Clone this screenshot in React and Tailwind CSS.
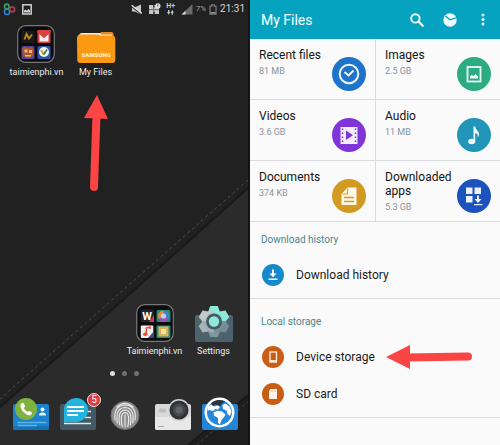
import React from "react";

/* ---------- Status bar glyphs ---------- */

function StatusBar() {
  return (
    <div className="flex h-[18px] items-center justify-between px-[3px] text-[#c8c8c8]">
      <div className="flex items-center gap-[6px]">
        <svg width="13" height="13" viewBox="0 0 13 13" fill="none" strokeWidth="1.6">
          <circle cx="3.8" cy="3.4" r="2.3" stroke="#3a9b63" />
          <circle cx="4" cy="8.9" r="2.6" stroke="#2f7fc4" />
          <circle cx="9.2" cy="6.4" r="2.4" stroke="#b5414e" />
        </svg>
        <svg width="10" height="11" viewBox="0 0 10 11" fill="none">
          <rect x="0.8" y="0.8" width="8.4" height="9.2" stroke="#d0d0d0" strokeWidth="1.5" />
          <path d="M2 8.5V6.5L3.5 5.5L5 6.8L6.5 4.8L8 6.5V8.5Z" fill="#d0d0d0" />
        </svg>
      </div>
      <div className="flex items-center gap-[3px]">
        <svg className="mr-[2px]" width="12" height="11" viewBox="0 0 12 11">
          <path d="M1 3.4H3.6L10 0.4V10.4L3.6 7.4H1Z" fill="#c8c8c8" />
          <path d="M0.6 2.4L10.8 10.6" stroke="#222" strokeWidth="1.4" />
          <path d="M0.6 1.2L10.8 9.4" stroke="#e2e2e2" strokeWidth="1.4" />
        </svg>
        <svg width="13" height="12" viewBox="0 0 13 12">
          <path d="M1 2H5.2V4.4Q6 3.6 6.4 4.6V2H11V11H6.6V8.4Q5.6 9.400 5.200 8.400V11H1V7.400Q2.600 6.600 1 5.800Z" fill="#c8c8c8" />
          <path d="M5.800 2V11M1 6.600H11" stroke="#4a4a4a" strokeWidth="0.700" />
          <circle cx="9.9" cy="2.9" r="2.6" fill="#e0e0e0" />
          <path d="M9.9 1.4V3.6" stroke="#555" strokeWidth="1" />
        </svg>
        <div className="flex w-[14px] flex-col items-center">
          <span className="text-[7px] font-bold leading-[7px]">H+</span>
          <svg width="7" height="5" viewBox="0 0 7 5" fill="#c8c8c8">
            <path d="M0 2H1V0H2.4V2H3.4L1.7 4.8Z" />
            <path d="M3.6 2.8L5.2 0L6.9 2.8H5.9V4.8H4.6V2.8Z" />
          </svg>
        </div>
        <svg width="12" height="11" viewBox="0 0 12 11">
          <path d="M0.5 10.5L11.5 0V10.5Z" fill="#6a6a6a" />
          <path d="M0.5 10.5L4.5 6.7V10.5Z" fill="#d8d8d8" />
        </svg>
        <span className="text-[8px] leading-[10px] text-[#a4a4a4]">7%</span>
        <svg width="8" height="11" viewBox="0 0 8 11" fill="none">
          <path d="M1 2.2H2.7V0.8H5.3V2.2H7V10.2H1Z" stroke="#7c7c7c" strokeWidth="1.2" />
          <path d="M1.5 8.8H6.5" stroke="#a0a0a0" strokeWidth="1.4" />
        </svg>
        <span className="text-[10px] leading-[14px] text-[#d4d4d4]">21:31</span>
      </div>
    </div>
  );
}

/* ---------- Launcher artwork ---------- */

function FolderOne() {
  return (
    <svg width="38" height="38" viewBox="0 0 38 38">
      <rect x="0.7" y="0.7" width="36.6" height="36.6" rx="8" fill="#0c0c10" stroke="#77777a" strokeWidth="1.2" />
      <rect x="4.5" y="6" width="13" height="12" rx="2" fill="#1b1a18" />
      <path d="M7.500 14.500L9.500 9L12 13.500L15 9.500" stroke="#b98a2c" strokeWidth="1.800" fill="none" />
      <rect x="20.5" y="5" width="13" height="13" rx="1" fill="#d8433f" />
      <path d="M22.5 7.5L27 11.5L31.5 7.5V16.5H22.5Z" fill="#f4eeee" />
      <path d="M20.5 6L27 12L33.5 6" stroke="#d8433f" strokeWidth="2" fill="none" />
      <rect x="4.5" y="21" width="13" height="13" rx="1.5" fill="#56409a" />
      <path d="M5 24L8 21.5L11 23L14.5 21.5L17 25L16 31L11 33.5L6 31Z" fill="#a9542d" />
      <path d="M7.5 24.5H10.5V27.5H7.5ZM12 25H15V28H12ZM8 30H14V31.5H8Z" fill="#e7b67c" />
      <rect x="20.5" y="21" width="13" height="13" rx="1.5" fill="#2c56a9" />
      <circle cx="27" cy="27" r="5" fill="#f6f6f6" />
      <path d="M24 25L26.6 29.5" stroke="#d5a327" strokeWidth="2" />
      <path d="M26.6 29.5L30 24.5" stroke="#3c8b4e" strokeWidth="2" />
    </svg>
  );
}

function FolderTwo() {
  return (
    <svg width="38" height="38" viewBox="0 0 38 38">
      <rect x="0.7" y="0.7" width="36.6" height="36.6" rx="8" fill="#0d0d0e" stroke="#77777a" strokeWidth="1.2" />
      <rect x="5" y="5.5" width="13" height="12.5" rx="1.5" fill="#24242b" />
      <path d="M13 18L18 11V18Z" fill="#c63a63" />
      <text x="11" y="15.5" fontSize="11" fontWeight="700" textAnchor="middle" fill="#fff">W</text>
      <rect x="20.5" y="6" width="14" height="12" rx="1.5" fill="#23897e" />
      <circle cx="27.5" cy="12" r="5.5" fill="#39a96c" />
      <path d="M27.5 12V6.5A5.5 5.5 0 0 1 32.3 14.8Z" fill="#3c83d7" />
      <path d="M27.5 12L32.3 14.8A5.5 5.5 0 0 1 22.7 14.8Z" fill="#a04bbd" />
      <path d="M27.5 12L22.7 14.8A5.5 5.5 0 0 1 27.5 6.5Z" fill="#e48b35" />
      <circle cx="27.5" cy="12" r="2.6" fill="#b9d7da" />
      <rect x="4.8" y="21.5" width="12.5" height="12.5" rx="1" fill="#f2efee" />
      <path d="M12 34L17.3 28V34Z" fill="#46447e" />
      <path d="M10.3 30V24L14 23V25" stroke="#e4502e" strokeWidth="1.5" fill="none" />
      <ellipse cx="9.2" cy="30.3" rx="2.2" ry="1.8" fill="#e4502e" />
      <rect x="20.5" y="21.5" width="14" height="12.5" rx="1" fill="#278d7b" />
      <rect x="22.5" y="22.5" width="10" height="10" fill="#d7b558" />
      <rect x="25" y="25" width="5" height="5" fill="#f2e1a0" />
    </svg>
  );
}

function MyFilesIcon() {
  return (
    <svg width="40" height="38" viewBox="0 0 40 38">
      <path d="M21 10L25.5 7H35.5Q37.5 7 37.7 10V15H21Z" fill="#e58a18" />
      <path d="M3 11Q3 8 6 8H24L26 9.5H36V16H3Z" fill="#f5ead8" />
      <path d="M1 13.5Q1 9.5 4.5 9.5H20.5Q23 9.5 24.5 10.5H36Q39.3 10.5 39.3 14V35Q39.3 38 36 38H4.5Q1.3 38 1.3 35Z" fill="#fb9a12" />
      <text x="20.2" y="32" fontSize="6" fontWeight="900" textAnchor="middle" fill="#fdeed4">SAMSUNG</text>
    </svg>
  );
}

const TEETH = [
  { angle: 0, color: "#8ce8d7" },
  { angle: 60, color: "#8ce8d7" },
  { angle: 120, color: "#748c95" },
  { angle: 180, color: "#80989f" },
  { angle: 240, color: "#a9b5b8" },
  { angle: 300, color: "#c0cbc9" },
];

function SettingsIcon() {
  return (
    <svg width="40" height="38" viewBox="0 0 40 38">
      <path d="M1 13Q1 11 3 11H37Q39 11 39 13V36Q39 38 37 38H3Q1 38 1 36Z" fill="#4d626d" />
      {TEETH.map(({ angle, color }) => (
        <path key={angle} d="M14 8L16.200 2H23.800L26 8Z" fill={color} transform={`rotate(${angle} 20 17.5)`} />
      ))}
      <path d="M20 6.500A11 11 0 0 1 31 17.500H20Z" fill="#8ce8d7" />
      <path d="M31 17.500A11 11 0 0 1 20 28.500V17.500Z" fill="#788f98" />
      <path d="M20 28.500A11 11 0 0 1 9 17.500H20Z" fill="#a3b0b3" />
      <path d="M9 17.500A11 11 0 0 1 20 6.500V17.500Z" fill="#c0cbc9" />
      <circle cx="20" cy="17.5" r="8" fill="#465b65" />
      <circle cx="20" cy="17.5" r="5.2" fill="#8deadb" />
    </svg>
  );
}

function DialerIcon() {
  return (
    <svg width="38" height="36" viewBox="0 0 38 36">
      <path d="M1 9Q1 7 3 7H35Q37 7 37 9V31Q37 33 35 33H3Q1 33 1 31Z" fill="#1b82cb" />
      <path d="M1 29H37V31Q37 33 35 33H3Q1 33 1 31Z" fill="#1673b7" />
      <circle cx="30.5" cy="12.5" r="2" fill="#eef6fb" />
      <path d="M27 18.5Q27 15.5 30.5 15.5T34 18.5Z" fill="#eef6fb" />
      <path d="M5.5 25.5H34.5M5.5 28.5H25" stroke="#5fb3e8" strokeWidth="1.3" />
      <circle cx="14" cy="12" r="11" fill="#7eb43e" />
      <path d="M8.6 7.2Q10.5 4.6 11.8 6.5L13 9Q13.3 10 11.8 11Q13 13.8 15.5 15Q16.6 13.6 17.5 14L19.8 15.4Q20.8 16.4 19 17.8Q16.5 19.6 12.3 15.8Q7.5 11.2 8.6 7.2Z" fill="#fff" />
    </svg>
  );
}

function MessagesIcon() {
  return (
    <svg width="38" height="36" viewBox="0 0 38 36">
      <path d="M1 9Q1 7 3 7H35Q37 7 37 9V31Q37 33 35 33H3Q1 33 1 31Z" fill="#455964" />
      <path d="M5 26.5H32M26 20.5H32M26 14.5H32" stroke="#dfe5e8" strokeWidth="1.4" />
      <path d="M5 26V12A12 12 0 1 1 17 25H8Z" fill="#23b4e0" />
      <path d="M8 10H25M8 14H25M8 18H19" stroke="#fff" strokeWidth="2" />
    </svg>
  );
}

function FingerprintIcon() {
  return (
    <svg width="38" height="36" viewBox="0 0 38 36" fill="none">
      <circle cx="19" cy="18.5" r="14" fill="#8d8d8d" stroke="#707070" />
      <g stroke="#ededed" strokeWidth="1.1" strokeLinecap="round">
        <path d="M9 23Q7.5 8.5 19 8Q31 8.5 29 23" />
        <path d="M11.3 26Q9 11 19 10.5Q29 11 26.7 26" />
        <path d="M13.8 28Q11 13.5 19 13Q27 13.5 24.2 28" />
        <path d="M16.2 29.5Q13.5 16 19 15.5Q24.5 16 21.8 29.5" />
        <path d="M19 18V30" />
        <path d="M11 10Q19 2.500 27 10" />
      </g>
    </svg>
  );
}

function CameraIcon() {
  return (
    <svg width="38" height="36" viewBox="0 0 38 36">
      <path d="M1 9Q1 7 3 7H35Q37 7 37 9V31Q37 33 35 33H3Q1 33 1 31Z" fill="#d9d9d9" />
      <path d="M1 20H37V31Q37 33 35 33H3Q1 33 1 31Z" fill="#e8e8e8" />
      <rect x="5" y="11.500" width="7" height="4" rx="1" fill="#c0c0c0" />
      <path d="M4 29.500H10" stroke="#aaa" strokeWidth="1" />
      <circle cx="25" cy="13" r="11" fill="#d2d2d2" />
      <circle cx="25" cy="13" r="9.500" fill="#303336" />
      <circle cx="25" cy="13" r="6.500" fill="#45494e" />
      <circle cx="25" cy="13" r="3.600" fill="#5f6469" />
    </svg>
  );
}

function BrowserIcon() {
  return (
    <svg width="38" height="36" viewBox="0 0 38 36">
      <path d="M1 9Q1 7 3 7H35Q37 7 37 9V31Q37 33 35 33H3Q1 33 1 31Z" fill="#2484d6" />
      <circle cx="18.500" cy="15.500" r="15" fill="#fff" />
      <circle cx="18.500" cy="15.500" r="12.500" fill="#2587d9" />
      <path d="M10 6.300Q13 3.300 18.500 3Q22 3 24 4.500L21 6.500L19.500 9L15 7.500L12 9Z" fill="#30343a" />
      <path d="M7 9.500L10 7.500L13 9.500L16.500 8.500L19 10L17 12.500L14.500 12L12 14L8.500 13L6.500 14Z" fill="#fff" />
      <path d="M12.500 15.500L16 13.800L21 14.500L24.500 17.500L23 20L20.500 23L19 27.500L17 26L17 21L13 18.500Z" fill="#fff" />
      <path d="M21.500 8L24.500 6.500L28.500 9.500L30.500 14.500L29 19L26.500 17L25.500 13.500L22 12Z" fill="#fff" />
    </svg>
  );
}

function Wallpaper() {
  return (
    <svg className="absolute inset-0 h-full w-full" viewBox="0 0 250 445" preserveAspectRatio="none" aria-hidden="true">
      <rect width="250" height="445" fill="#212121" />
      <path d="M250 189L125 300L0 408V445H250Z" fill="#2b2b2b" />
      <path d="M250 188L124 300L0 407" stroke="#191919" strokeWidth="2" fill="none" />
      <path d="M250 180L115 298L0 399" stroke="#505050" strokeWidth="1" strokeDasharray="3 3" fill="none" />
      <path d="M190 445L250 395V445Z" fill="#1e1e1e" />
      <path d="M190 445L250 395" stroke="#191919" strokeWidth="2" />
      <path d="M198 445L250 402" stroke="#484848" strokeWidth="1" strokeDasharray="3 3" />
    </svg>
  );
}

function HomeApp({ label, icon, children }) {
  return (
    <div className="relative flex flex-col items-center">
      <button type="button" className="flex flex-col items-center gap-[2px] whitespace-nowrap text-[9px] leading-[14px] text-[#ececec]">
        {icon}
        <span>{label}</span>
      </button>
      {children}
    </div>
  );
}

function HomeScreen() {
  return (
    <section className="relative flex min-h-screen flex-col border-r-2 border-[#141414]" aria-label="Home screen">
      <Wallpaper />
      <div className="relative flex flex-1 flex-col">
        <StatusBar />
        <div className="mt-[7px] grid grid-cols-4 pl-[7px] pr-[5px]">
          <HomeApp label="taimienphi.vn" icon={<FolderOne />} />
          <HomeApp label="My Files" icon={<MyFilesIcon />}>
            <svg className="absolute top-full mt-4" width="24" height="97" viewBox="0 0 24 97" aria-hidden="true">
              <path d="M12.500 20L10 92" stroke="#fb4444" strokeWidth="8" strokeLinecap="round" />
              <path d="M13 0L24 24L0 23Z" fill="#fb4444" />
            </svg>
          </HomeApp>
        </div>
        <div className="flex-1" />
        <div className="grid grid-cols-4 pl-[7px] pr-[5px]">
          <div className="col-start-3">
            <HomeApp label="Taimienphi.vn" icon={<FolderTwo />} />
          </div>
          <HomeApp label="Settings" icon={<SettingsIcon />} />
        </div>
        <div className="mt-[13px] flex justify-center gap-[7px]" aria-hidden="true">
          <span className="size-[5px] rounded-full bg-[#dedede]" />
          <span className="size-[5px] rounded-full bg-[#717171]" />
          <span className="size-[5px] rounded-full bg-[#717171]" />
        </div>
        <nav className="mt-[21px] grid grid-cols-5 justify-items-center pb-3 pl-[7px] pr-[4px]" aria-label="Dock">
          <button type="button" aria-label="Phone"><DialerIcon /></button>
          <button type="button" aria-label="Messages" className="relative">
            <MessagesIcon />
            <span className="absolute -right-1 -top-1 flex size-[14px] items-center justify-center rounded-full border border-[#f1dede] bg-[#dd3c42] text-[10px] leading-[12px] text-white">5</span>
          </button>
          <button type="button" aria-label="Fingerprint"><FingerprintIcon /></button>
          <button type="button" aria-label="Camera"><CameraIcon /></button>
          <button type="button" aria-label="Browser"><BrowserIcon /></button>
        </nav>
      </div>
    </section>
  );
}

/* ---------- File manager ---------- */

const CATEGORIES = [
  {
    name: "Recent files", size: "81 MB", bg: "bg-[#1e74c8]",
    icon: (
      <g fill="none" stroke="#eef7ff" strokeWidth="2">
        <circle cx="17" cy="17" r="9.3" />
        <path d="M12.500 15L16.500 18.500L21.500 13.500" />
      </g>
    ),
  },
  {
    name: "Images", size: "2.5 GB", bg: "bg-[#2bac83]",
    icon: (
      <g>
        <rect x="10.500" y="10" width="13" height="14.500" fill="none" stroke="#effaf5" strokeWidth="1.800" />
        <path d="M13 21.500V19L15 18L16.500 19L18.500 17L21 19.500V21.500Z" fill="#effaf5" />
      </g>
    ),
  },
  {
    name: "Videos", size: "3.6 GB", bg: "bg-[#8035d9]",
    icon: (
      <g>
        <rect x="8.500" y="9" width="17" height="17" fill="#f4ecff" />
        <path d="M10.500 10.500V25M23.500 10.500V25" stroke="#8035d9" strokeWidth="1.500" strokeDasharray="1.500 2.500" />
        <path d="M14 12.500V22L21 17.300Z" fill="#8035d9" />
      </g>
    ),
  },
  {
    name: "Audio", size: "11 MB", bg: "bg-[#2196b9]",
    icon: (
      <g fill="#f0fbff">
        <ellipse cx="14.700" cy="23.500" rx="3.500" ry="2.800" />
        <path d="M16.500 8.500H18.200Q18.600 11.200 20.700 12.900Q23.400 15.800 20.800 19.500Q21.400 15.900 18.200 15V23.500H16.500Z" />
      </g>
    ),
  },
  {
    name: "Documents", size: "374 KB", bg: "bg-[#d29a20]",
    icon: (
      <g>
        <path d="M15.500 8.500H24.500V26H9.500V15Z" fill="#fff8e8" />
        <path d="M15.700 9.500V15H10.500" stroke="#d29a20" strokeWidth="1" fill="none" />
        <path d="M12 18.500H22M12 22.500H22" stroke="#d29a20" strokeWidth="1.400" />
      </g>
    ),
  },
  {
    name: "Downloaded apps", size: "5.3 GB", bg: "bg-[#1c52bd]",
    icon: (
      <g fill="#eaf3ff">
        <rect x="9" y="8.500" width="6.500" height="6.500" />
        <rect x="17.500" y="8.500" width="6.500" height="6.500" />
        <rect x="9" y="17" width="6.500" height="6.500" />
        <path d="M20 16.500H22V20H24.500L21 24L17.500 20H20Z" />
        <rect x="17" y="25" width="8.500" height="1.200" />
      </g>
    ),
  },
];

function Category({ name, size, bg, icon }) {
  return (
    <button type="button" className="flex h-[61px] items-start justify-between border-b border-[#d9dbdd] px-[9px] pt-[9px] text-left even:border-l">
      <span className="flex min-w-0 flex-1 flex-col gap-px">
        <span className="text-[12px] leading-[14px] text-[#141414]">{name}</span>
        <span className="text-[9px] leading-[16px] text-[#87939e]">{size}</span>
      </span>
      <span className={`mt-[9px] size-[34px] shrink-0 rounded-full ${bg}`}>
        <svg width="34" height="34" viewBox="0 0 34 34">{icon}</svg>
      </span>
    </button>
  );
}

function ListRow({ label, bg, children }) {
  return (
    <button type="button" className="flex h-[37px] items-center gap-3 pl-3 text-left text-[12px] text-[#1a1a1a]">
      <span className={`size-[22px] rounded-full ${bg}`}>
        <svg width="22" height="22" viewBox="0 0 22 22">{children}</svg>
      </span>
      {label}
    </button>
  );
}

function FilesScreen() {
  return (
    <main className="min-h-screen bg-[#fafafa]">
      <header className="flex h-[39px] items-center justify-between bg-[#06a3c0] pl-[11px] pr-[10px] text-white">
        <h1 className="text-[14px] leading-5">My Files</h1>
        <div className="flex items-center gap-[19px]">
          <button type="button" aria-label="Search">
            <svg width="14" height="14" viewBox="0 0 14 14" fill="none" stroke="#eefaff" strokeLinecap="round">
              <circle cx="5.400" cy="5.400" r="4.200" strokeWidth="1.900" />
              <path d="M8.700 8.700L12.700 12.700" strokeWidth="2.200" />
            </svg>
          </button>
          <button type="button" aria-label="Storage usage">
            <svg width="14" height="14" viewBox="0 0 14 14">
              <circle cx="7" cy="7" r="6.700" fill="#eefaff" />
              <path d="M2.500 3L7 6.800L12.800 4.800" stroke="#06a3c0" strokeWidth="1.300" fill="none" />
            </svg>
          </button>
          <button type="button" aria-label="More options" className="px-[5px]">
            <svg width="4" height="13" viewBox="0 0 4 13" fill="#eefaff">
              <circle cx="2" cy="2" r="1.500" />
              <circle cx="2" cy="6.500" r="1.500" />
              <circle cx="2" cy="11" r="1.500" />
            </svg>
          </button>
        </div>
      </header>

      <div className="grid grid-cols-2">
        {CATEGORIES.map((c) => (
          <Category key={c.name} {...c} />
        ))}
      </div>

      <section className="flex flex-col border-b border-[#d9dbdd] pb-[5px] pt-[10px]">
        <h2 className="pl-[11px] text-[10px] leading-4 text-[#4e858d]">Download history</h2>
        <div className="mt-2 flex">
          <ListRow label="Download history" bg="bg-[#1689cc]">
            <path d="M10 5.500H12V9.500H14.500L11 13.200L7.500 9.500H10Z" fill="#fff" />
            <rect x="6.500" y="14.500" width="9" height="1.400" fill="#fff" />
          </ListRow>
        </div>
      </section>

      <section className="flex flex-col border-b border-[#d9dbdd] pb-[5px] pt-[15px]">
        <h2 className="pl-[11px] text-[10px] leading-4 text-[#4e858d]">Local storage</h2>
        <div className="mt-2 flex items-center gap-[11px]">
          <ListRow label="Device storage" bg="bg-[#c95d14]">
            <rect x="8" y="6" width="6.500" height="10" fill="none" stroke="#fff3e8" strokeWidth="1.300" />
            <path d="M7.500 15H15" stroke="#fff3e8" strokeWidth="1.800" />
          </ListRow>
          <svg width="87" height="24" viewBox="0 0 87 24" aria-hidden="true">
            <path d="M20 12.500L82 11.500" stroke="#fb4444" strokeWidth="8" strokeLinecap="round" />
            <path d="M0 12L24 0V24Z" fill="#fb4444" />
          </svg>
        </div>
        <div className="flex">
          <ListRow label="SD card" bg="bg-[#c95d14]">
            <path d="M8.500 6H15V16H7V8Z" fill="#fff3e8" />
            <path d="M8.500 8H14" stroke="#dba27a" strokeWidth="1" strokeDasharray="1 1" />
          </ListRow>
        </div>
      </section>
    </main>
  );
}

export default function App() {
  return (
    <div className="grid min-h-screen grid-cols-2 font-[Roboto,sans-serif]">
      <HomeScreen />
      <FilesScreen />
    </div>
  );
}
